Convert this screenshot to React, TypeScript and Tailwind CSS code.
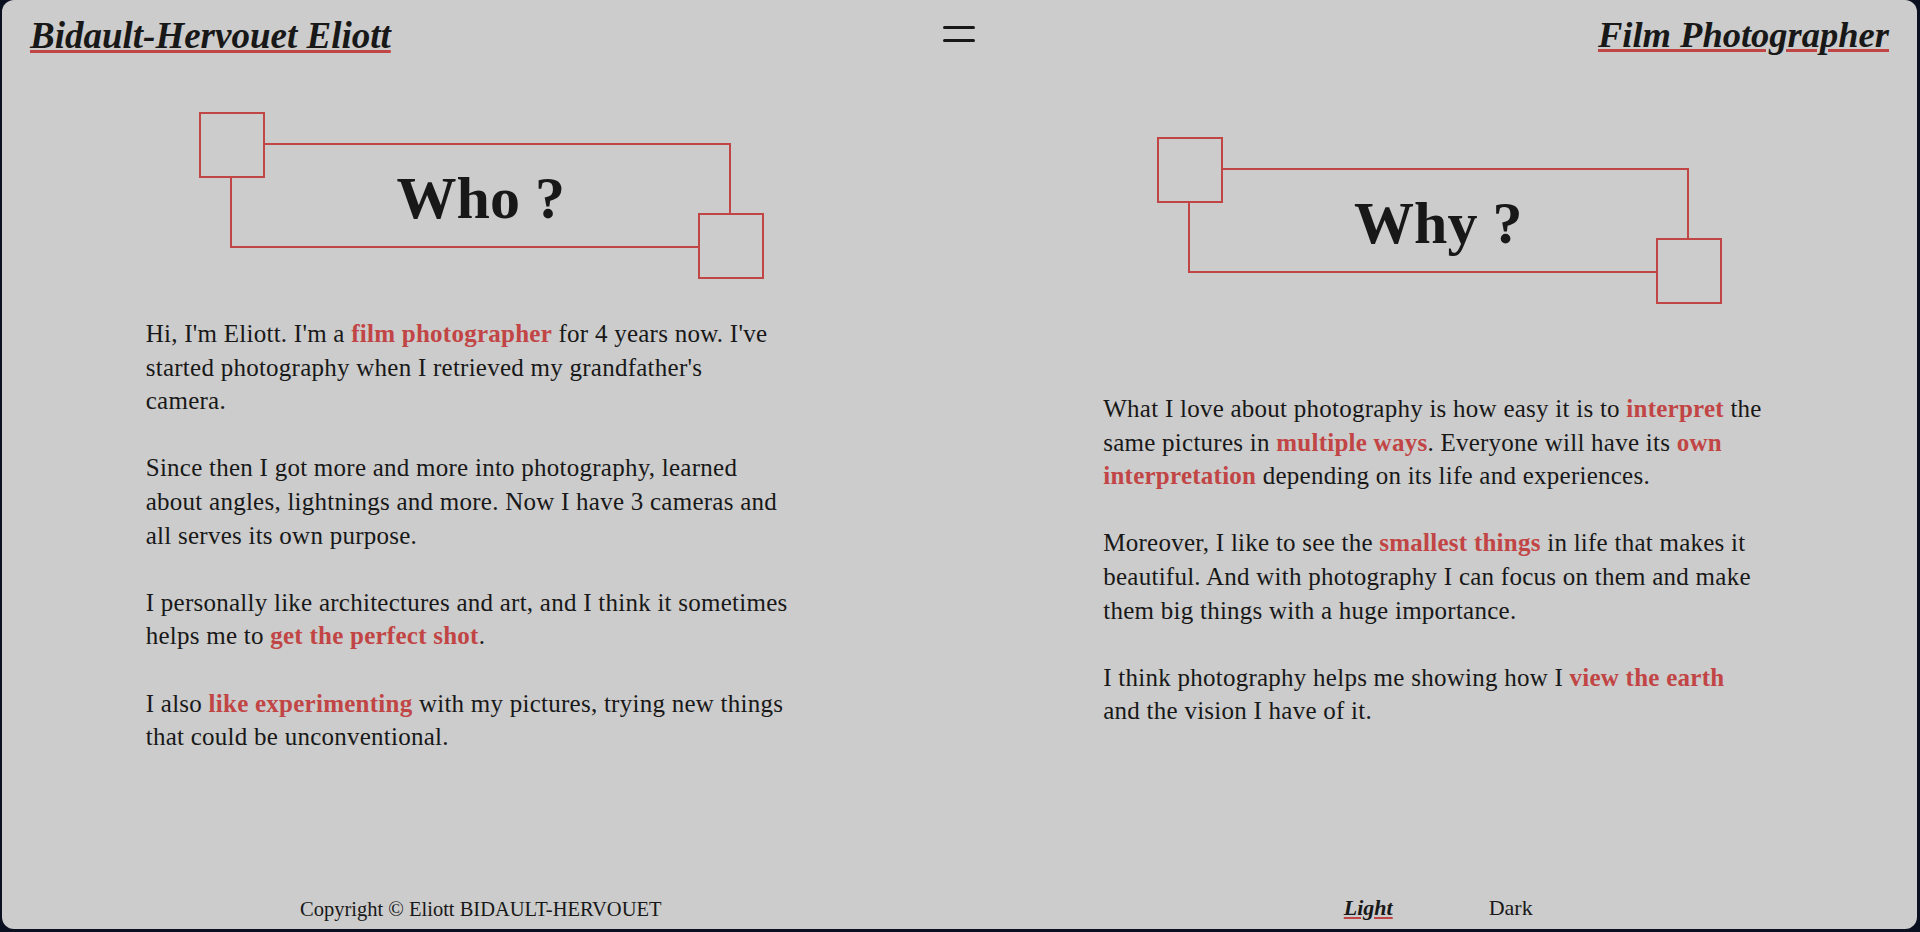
import React from "react";

const red = "text-[#c24545] font-bold";

function TitleBox({ title }: { title: string }) {
  return (
    <div className="relative w-[501px] h-[105px] border-2 border-[#c24545] flex items-center justify-center pt-[4px]">
      <div className="absolute -top-[33px] -left-[33px] w-[66px] h-[66px] border-2 border-[#c24545] bg-[#cccccc]" />
      <h2 className="text-[60px] leading-none font-black text-[#181818]">{title}</h2>
      <div className="absolute -bottom-[33px] -right-[35px] w-[66px] h-[66px] border-2 border-[#c24545] bg-[#cccccc]" />
    </div>
  );
}

function Hl({ children }: { children: React.ReactNode }) {
  return <strong className={red}>{children}</strong>;
}

export default function App() {
  return (
    <div className="h-[932px] bg-[#0b1020] pl-[2px] pr-[3px] pb-[3px] font-['Liberation_Serif',serif] text-[#181818]">
      <div className="h-full rounded-[12px] bg-[#cccccc] flex flex-col">
        <header className="grid grid-cols-3 h-[70px] px-[28px]">
          <a className="justify-self-start mt-[17px] text-[37px] leading-none font-bold italic underline decoration-[#c24545] decoration-[3px] underline-offset-[2px]">
            Bidault-Hervouet Eliott
          </a>
          <button className="justify-self-center self-start mt-[26px] flex flex-col gap-[10px]" aria-label="menu">
            <span className="block w-[32px] h-[3px] rounded-full bg-[#181818]" />
            <span className="block w-[32px] h-[3px] rounded-full bg-[#181818]" />
          </button>
          <a className="justify-self-end mt-[17px] text-[36.5px] leading-none font-bold italic underline decoration-[#c24545] decoration-[3px] underline-offset-[2px]">
            Film Photographer
          </a>
        </header>

        <main className="flex-1 grid grid-cols-2">
          <section className="flex flex-col items-center pt-[73px]">
            <TitleBox title="Who ?" />
            <div className="mt-[69px] w-[670px] flex flex-col gap-[33.6px] text-[25px] tracking-[0.25px] leading-[33.6px] whitespace-nowrap">
              <p>
                Hi, I'm Eliott. I'm a <Hl>film photographer</Hl> for 4 years now. I've
                <br />
                started photography when I retrieved my grandfather's
                <br />
                camera.
              </p>
              <p>
                Since then I got more and more into photography, learned
                <br />
                about angles, lightnings and more. Now I have 3 cameras and
                <br />
                all serves its own purpose.
              </p>
              <p>
                I personally like architectures and art, and I think it sometimes
                <br />
                helps me to <Hl>get the perfect shot</Hl>.
              </p>
              <p>
                I also <Hl>like experimenting</Hl> with my pictures, trying new things
                <br />
                that could be unconventional.
              </p>
            </div>
          </section>

          <section className="flex flex-col items-center pt-[98px]">
            <TitleBox title="Why ?" />
            <div className="mt-[119px] w-[670px] flex flex-col gap-[33.6px] text-[25px] tracking-[0.25px] leading-[33.6px] whitespace-nowrap">
              <p>
                What I love about photography is how easy it is to <Hl>interpret</Hl> the
                <br />
                same pictures in <Hl>multiple ways</Hl>. Everyone will have its <Hl>own</Hl>
                <br />
                <Hl>interpretation</Hl> depending on its life and experiences.
              </p>
              <p>
                Moreover, I like to see the <Hl>smallest things</Hl> in life that makes it
                <br />
                beautiful. And with photography I can focus on them and make
                <br />
                them big things with a huge importance.
              </p>
              <p>
                I think photography helps me showing how I <Hl>view the earth</Hl>
                <br />
                and the vision I have of it.
              </p>
            </div>
          </section>
        </main>

        <footer className="grid grid-cols-2 items-end pb-[10px]">
          <p className="justify-self-center text-[20.5px] leading-none">Copyright © Eliott BIDAULT-HERVOUET</p>
          <div className="justify-self-center flex gap-[96px] text-[22px] leading-none">
            <button className="font-bold italic underline decoration-[#c24545] decoration-[2px] underline-offset-[2px]">Light</button>
            <button>Dark</button>
          </div>
        </footer>
      </div>
    </div>
  );
}
